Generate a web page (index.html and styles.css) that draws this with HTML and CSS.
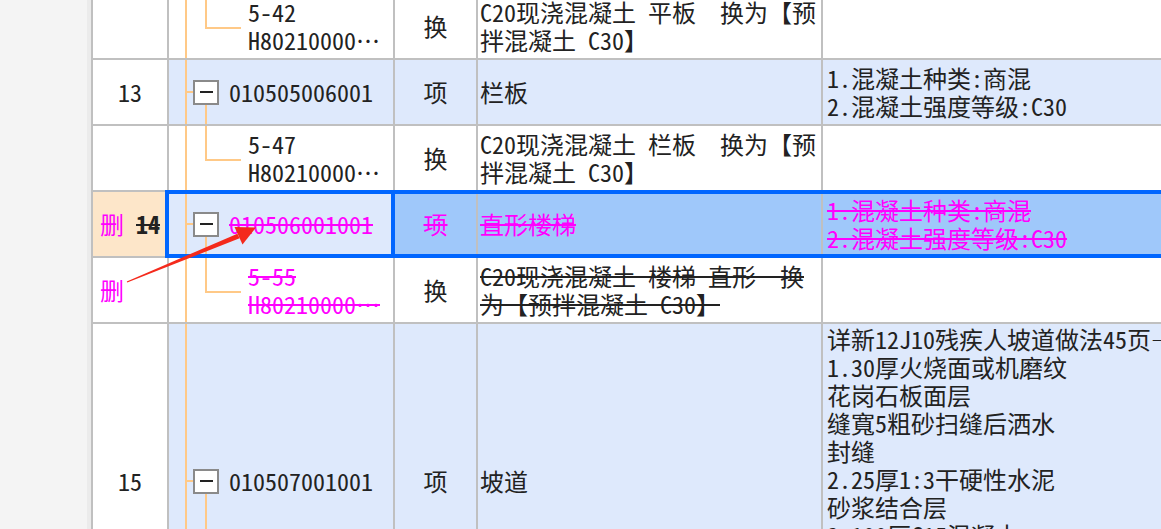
FILE: index.html
```html
<!DOCTYPE html>
<html lang="zh-CN">
<head>
<meta charset="utf-8">
<title>清单</title>
<link rel="stylesheet" href="styles.css">
</head>
<body>
<div class="side"></div>
<div class="strip"></div>
<div class="table">
  <div class="rows">
    <div class="row">
      <div class="cell num"></div>
      <div class="cell code child"><span class="txt">5-42<br>H80210000…</span></div>
      <div class="cell type">换</div>
      <div class="cell name"><span>C20现浇混凝土 平板  换为【预<br>拌混凝土 C30】</span></div>
      <div class="cell desc"></div>
    </div>
    <div class="row hl">
      <div class="cell num">13</div>
      <div class="cell code"><span class="toggle"><i class="minus"></i></span><span class="txt">010505006001</span></div>
      <div class="cell type">项</div>
      <div class="cell name">栏板</div>
      <div class="cell desc"><span>1.混凝土种类:商混<br>2.混凝土强度等级:C30</span></div>
    </div>
    <div class="row">
      <div class="cell num"></div>
      <div class="cell code child"><span class="txt">5-47<br>H80210000…</span></div>
      <div class="cell type">换</div>
      <div class="cell name"><span>C20现浇混凝土 栏板  换为【预<br>拌混凝土 C30】</span></div>
      <div class="cell desc"></div>
    </div>
    <div class="row hl sel">
      <div class="cell num"><span><span class="mark">删</span> <b class="strike">14</b></span></div>
      <div class="cell code"><span class="toggle"><i class="minus"></i></span><span class="txt del">010506001001</span></div>
      <div class="cell type"><span class="del">项</span></div>
      <div class="cell name"><span class="del">直形楼梯</span></div>
      <div class="cell desc"><span class="del">1.混凝土种类:商混<br>2.混凝土强度等级:C30</span></div>
      <div class="sel-band"></div>
      <div class="sel-cell"></div>
    </div>
    <div class="row">
      <div class="cell num left"><span class="mark">删</span></div>
      <div class="cell code child"><span class="txt del">5-55<br>H80210000…</span></div>
      <div class="cell type">换</div>
      <div class="cell name"><span class="strike">C20现浇混凝土 楼梯 直形  换<br>为【预拌混凝土 C30】</span></div>
      <div class="cell desc"></div>
    </div>
    <div class="row hl tall">
      <div class="cell num">15</div>
      <div class="cell code"><span class="toggle"><i class="minus"></i></span><span class="txt">010507001001</span></div>
      <div class="cell type">项</div>
      <div class="cell name">坡道</div>
      <div class="cell desc top"><span>详新12J10残疾人坡道做法45页—1<br>1.30厚火烧面或机磨纹<br>花岗石板面层<br>缝寬5粗砂扫缝后洒水<br>封缝<br>2.25厚1:3干硬性水泥<br>砂浆结合层<br>3.100厚C15混凝土<br>4.150厚碎石或卵石<br>灌M2.5混合砂浆<br>5.素土夯实</span></div>
    </div>
  </div>
</div>
<svg class="arrow" width="1161" height="529" viewBox="0 0 1161 529" aria-hidden="true">
  <polygon points="126.8,281.4 127.2,282.6 239.6,238.3 237.4,233.7" fill="#f42a1c"/>
  <polygon points="256,227.5 234.5,227 242.5,244.5" fill="#f42a1c"/>
</svg>
</body>
</html>
```

FILE: styles.css
```css
* { box-sizing: border-box; }
html, body { margin: 0; height: 100%; }
body {
  display: flex;
  overflow: hidden;
  background: #fff;
  font-family: "Noto Sans Mono CJK SC", "Noto Sans CJK SC", "Liberation Mono", monospace;
  font-size: 24px;
  line-height: 28px;
  color: #222;
}
.side { width: 87px; flex: none; background: #f4f4f4; }
.strip { width: 4px; flex: none; background: #ebebeb; }
.table {
  flex: 1;
  min-width: 0;
  border-left: 2px solid #c0c0c0;
  overflow: hidden;
}
.rows { margin-top: -6px; }
.row {
  display: grid;
  grid-template-columns: 76px 226px 83px 345px 1fr;
  height: 66px;
}
.row.tall { height: 316px; }
.cell {
  display: flex;
  align-items: center;
  min-width: 0;
  overflow: hidden;
  white-space: pre;
  border-right: 2px solid #c0c0c0;
  border-bottom: 2px solid #c0c0c0;
  background: #fff;
}
.num { justify-content: center; }
.num.left { justify-content: flex-start; padding-left: 7px; }
.type { justify-content: center; }
.name { padding-left: 2px; }
.desc { padding-left: 4px; border-right: none; }
.desc.top { align-items: flex-start; padding-top: 1px; }

.hl .code, .hl .type, .hl .name, .hl .desc { background: #dee9fc; }
.sel .num { background: #fde6c9; }
.sel .type, .sel .name, .sel .desc { background: #9fc8fa; }

/* tree column */
.code { position: relative; padding-left: 24px; }
.code::before {
  content: "";
  position: absolute;
  left: 16px; top: 0; bottom: 0;
  width: 2px;
  background: #ffc987;
}
.code.child { padding-left: 79px; }
.code.child::after {
  content: "";
  position: absolute;
  left: 36px; top: 0;
  width: 34px;
  height: calc(50% + 1px);
  border-left: 2px solid #ffc987;
  border-bottom: 2px solid #ffc987;
}
.toggle {
  position: relative;
  flex: none;
  width: 26px; height: 25px;
  margin-right: 10px;
  border: 2px solid #8a8a8a;
  background: #fff;
  display: flex;
  align-items: center;
  justify-content: center;
}
.toggle::before {
  content: "";
  position: absolute;
  left: -8px; top: 9px;
  width: 6px; height: 2px;
  background: #ffc987;
}
.toggle::after {
  content: "";
  position: absolute;
  left: 10px; top: 23px;
  width: 2px; height: 400px;
  background: #ffc987;
}
.minus { display: block; width: 13px; height: 2px; background: #222; }

.del {
  color: #ff00ff;
  text-decoration-line: line-through;
  text-decoration-thickness: 2px;
}
.strike {
  text-decoration-line: line-through;
  text-decoration-thickness: 2px;
}
.mark { color: #ff00ff; }
b.strike { font-weight: bold; }

/* selection overlay */
.row.sel { position: relative; }
.sel-band {
  position: absolute;
  left: 302px; right: 0; top: -2px; bottom: 0;
  border-top: 4px solid #0066ff;
  border-bottom: 4px solid #0066ff;
  pointer-events: none;
}
.sel-cell {
  position: absolute;
  left: 72px; top: -2px; bottom: 0;
  width: 230px;
  border: 4px solid #0066ff;
  pointer-events: none;
}
.arrow { position: absolute; left: 0; top: 0; pointer-events: none; }
```
